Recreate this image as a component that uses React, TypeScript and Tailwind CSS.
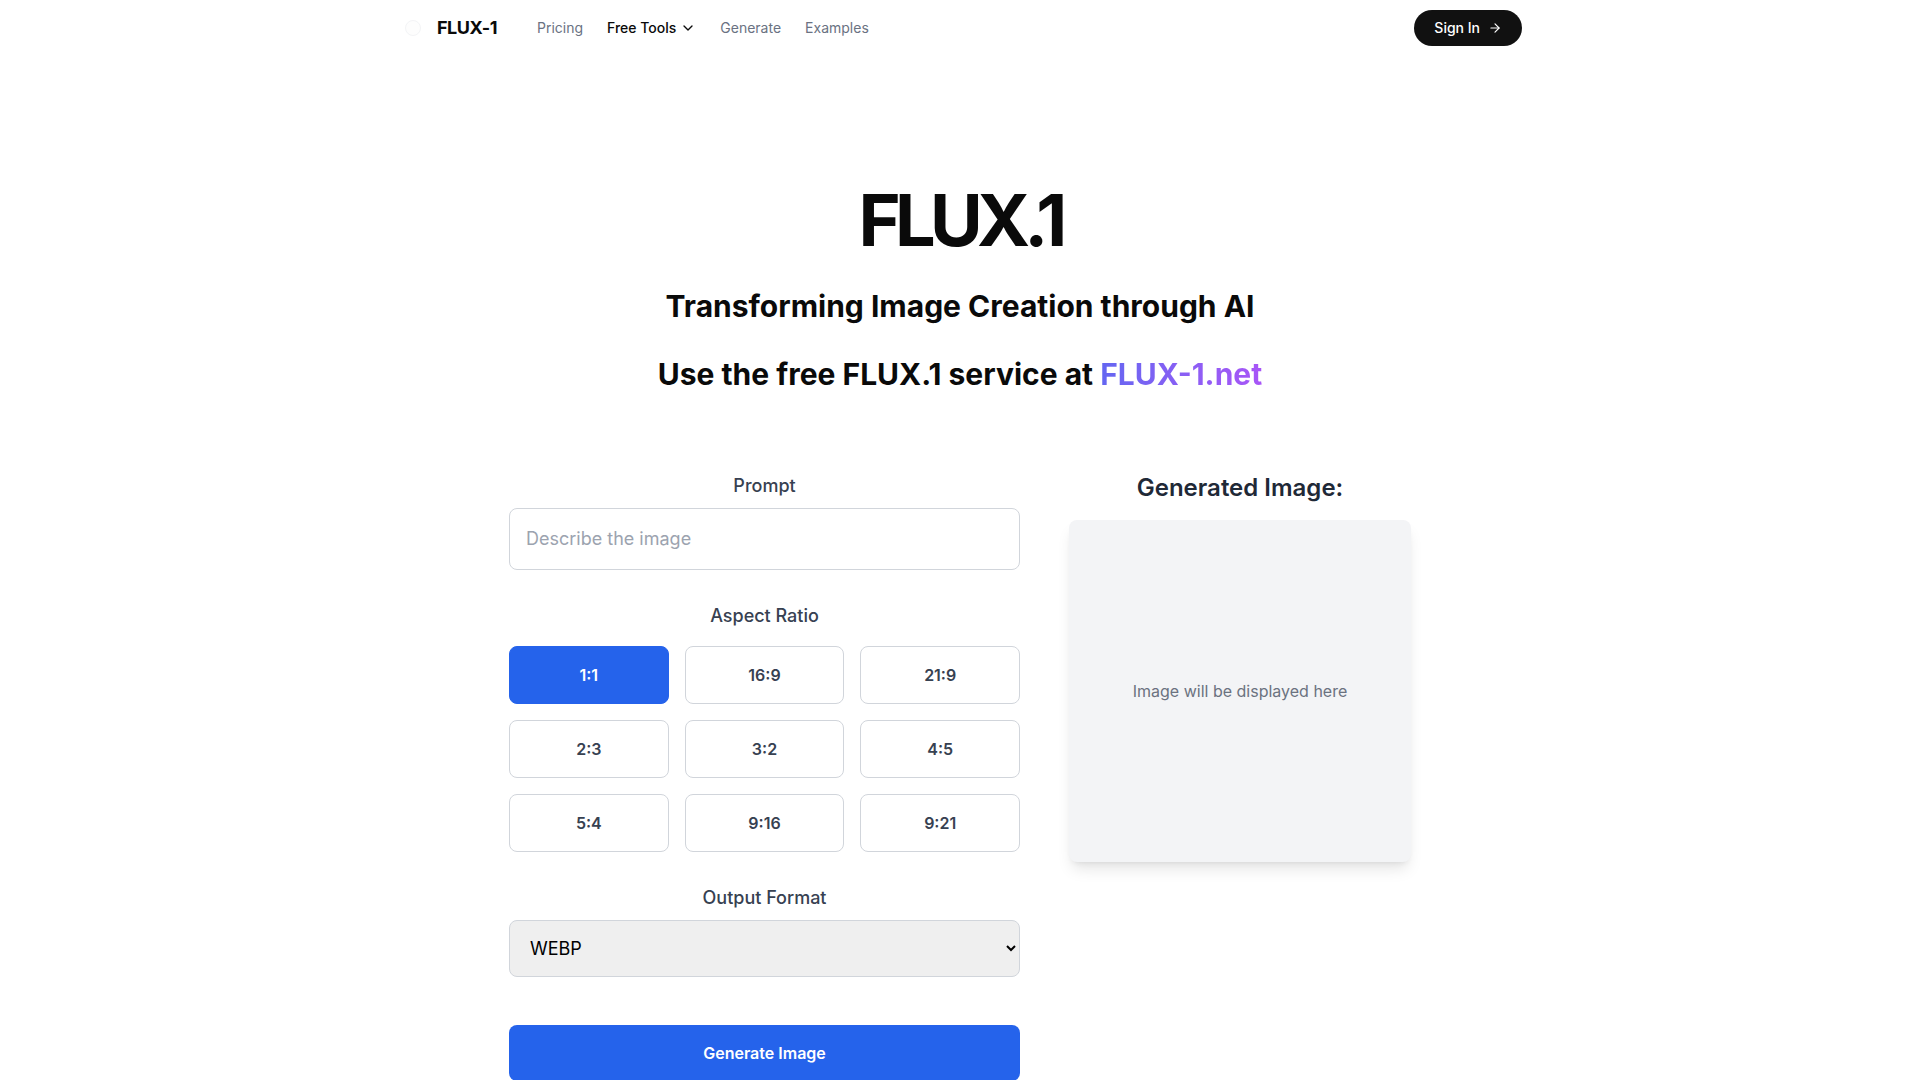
import { useState } from "react";
import { ChevronDown, ArrowRight } from "lucide-react";

const ratios = ["1:1", "16:9", "21:9", "2:3", "3:2", "4:5", "5:4", "9:16", "9:21"];

export default function App() {
  const [ratio, setRatio] = useState("1:1");
  const [prompt, setPrompt] = useState("");
  const [format, setFormat] = useState("webp");

  return (
    <div className="min-h-screen bg-white text-[#0a0a0a] font-['Inter',sans-serif]">
      <nav className="max-w-6xl mx-auto pl-[21px] pr-[14px] h-14 flex items-center justify-between">
        <div className="flex items-center">
          <div className="flex items-center gap-4 mr-10">
            <span className="w-4 h-4 rounded-full border border-gray-100 bg-gray-50/40" />
            <span className="text-lg font-bold tracking-tight">FLUX-1</span>
          </div>
          <div className="flex items-center gap-6 text-sm">
            <a className="text-gray-500">Pricing</a>
            <button className="flex items-center gap-1 font-medium">
              Free Tools
              <ChevronDown size={16} />
            </button>
            <a className="text-gray-500">Generate</a>
            <a className="text-gray-500">Examples</a>
          </div>
        </div>
        <button className="flex items-center gap-2 bg-[#111] text-white rounded-full px-5 h-9 text-sm font-medium">
          Sign In
          <ArrowRight size={14} />
        </button>
      </nav>

      <main className="pt-32 px-4">
        <div className="text-center">
          <h1 className="text-7xl leading-none font-bold tracking-[-0.08em] mb-8">FLUX.1</h1>
          <h2 className="text-3xl font-bold mb-8">Transforming Image Creation through AI</h2>
          <h2 className="text-3xl font-bold">
            Use the free FLUX.1 service at{" "}
            <span className="bg-gradient-to-r from-[#6366f1] to-[#a855f7] bg-clip-text text-transparent">FLUX-1.net</span>
          </h2>
        </div>

        <div className="w-[902px] mx-auto mt-20 grid grid-cols-[511px_342px] gap-[49px]">
          <div className="flex flex-col">
            <label className="text-lg font-medium text-[#374151] text-center mb-2">Prompt</label>
            <input
              value={prompt}
              onChange={(e) => setPrompt(e.target.value)}
              placeholder="Describe the image"
              className="w-full p-4 text-lg border border-[#d1d5db] rounded-lg placeholder:text-[#9ca3af] outline-none"
            />

            <label className="text-lg font-medium text-[#374151] text-center mt-8 mb-4">Aspect Ratio</label>
            <div className="grid grid-cols-3 gap-4">
              {ratios.map((r) => (
                <button
                  key={r}
                  onClick={() => setRatio(r)}
                  className={`py-4 rounded-lg border text-base font-semibold ${ratio === r ? "bg-[#2563eb] border-[#2563eb] text-white" : "bg-white border-[#d1d5db] text-[#374151]"}`}
                >
                  {r}
                </button>
              ))}
            </div>

            <label className="text-lg font-medium text-[#374151] text-center mt-8 mb-2">Output Format</label>
            <select
              value={format}
              onChange={(e) => setFormat(e.target.value)}
              className="w-full p-4 text-lg border border-[#d1d5db] rounded-lg bg-[#efefef] text-black"
            >
              <option value="webp">WEBP</option>
              <option value="png">PNG</option>
              <option value="jpg">JPG</option>
            </select>

            <button className="mt-12 w-full py-4 bg-[#2563eb] text-white rounded-lg text-base font-semibold">
              Generate Image
            </button>
          </div>

          <div className="flex flex-col">
            <h3 className="text-2xl font-semibold text-[#1f2937] text-center mb-4">Generated Image:</h3>
            <div className="aspect-square bg-[#f3f4f6] rounded-lg shadow-lg flex items-center justify-center">
              <p className="text-[#6b7280]">Image will be displayed here</p>
            </div>
          </div>
        </div>
      </main>
    </div>
  );
}
